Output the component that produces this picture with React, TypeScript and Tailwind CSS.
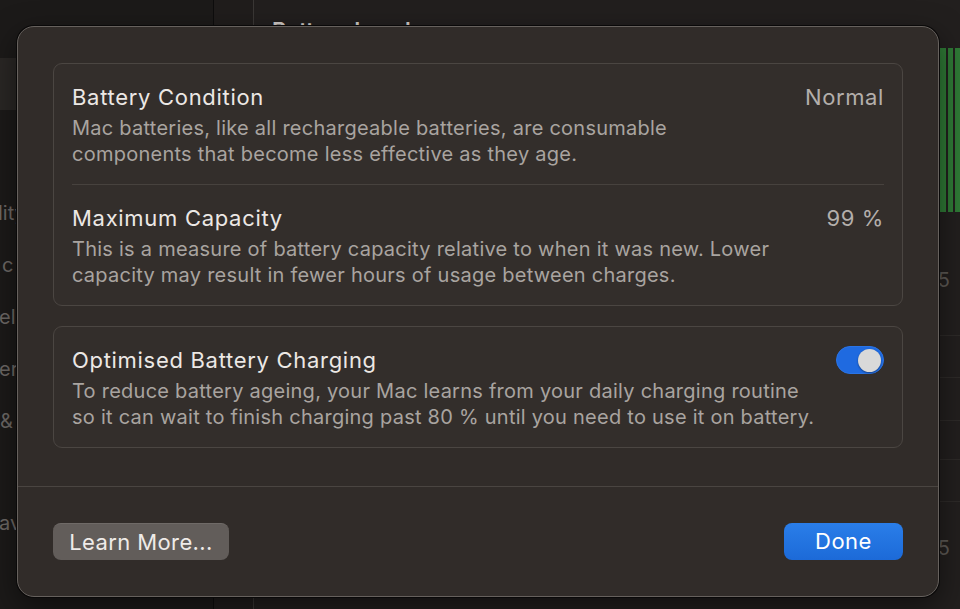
import React from "react";

const font = { fontFamily: "Inter, 'Noto Sans', 'Liberation Sans', sans-serif" };

function Section({ title, value, desc, toggle }: { title: string; value?: string; desc: string[]; toggle?: boolean }) {
  return (
    <div className="pl-[18px] pr-[18px] pt-[19px] pb-[17px]">
      <div className="flex items-center justify-between h-[28px]">
        <div className="text-[22px] leading-[28px] text-[#ece8e5] tracking-[0.7px]">{title}</div>
        {value && <div className="text-[22px] leading-[28px] text-[#b4afab] tracking-[0.6px]">{value}</div>}
        {toggle && (
          <div className="w-[48px] h-[28px] rounded-full bg-[#1f6ae0] flex items-center justify-end pr-[2px] border border-[#2a74e6]">
            <div className="w-[23px] h-[23px] rounded-full bg-[#d9d9d9] shadow-[0_1px_2px_rgba(0,0,0,0.4)]" />
          </div>
        )}
      </div>
      <div className="mt-[4px] text-[20px] leading-[26px] text-[#a9a4a0] tracking-[0.25px]">
        {desc.map((d, i) => (
          <div key={i}>{d}</div>
        ))}
      </div>
    </div>
  );
}

export default function App() {
  return (
    <div className="relative w-[960px] h-[609px] overflow-hidden bg-[#1e1b1a]" style={font}>
      {/* background app */}
      <div className="flex h-full">
        <div className="w-[214px] h-full bg-[#1c1a19] border-r border-[#0e0d0d] flex flex-col">
          <div className="h-[58px]" />
          <div className="h-[52px] bg-[#2a2725]" />
          <div className="flex flex-col text-[20px] text-[#6e6966] mt-[90px] gap-[26px] leading-[26px] pl-[0px]">
            <div className="ml-[-2px]">lity</div>
            <div className="ml-[2px]">c</div>
            <div className="ml-[-1px]">ells</div>
            <div className="ml-[-1px]">ers</div>
            <div className="ml-[0px]">&amp; S</div>
            <div className="mt-[50px] ml-[-1px]">avs</div>
          </div>
        </div>
        <div className="w-[40px] h-full bg-[#201d1c] border-r border-[#3a3735]" />
        <div className="flex-1 h-full bg-[#221f1e] flex flex-col">
          <div className="h-[48px] pl-[18px] pt-[14px] text-[22px] font-semibold text-[#cfcac6]">Battery Level</div>
          <div className="flex justify-end">
            <div className="flex gap-[2px] h-[164px] w-[20px]">
              <div className="w-[6px] bg-[#2f7a36]" />
              <div className="w-[5px] bg-[#2f7a36]" />
              <div className="w-[5px] bg-[#2f7a36]" />
            </div>
          </div>
          <div className="flex justify-end mt-[55px] text-[20px] leading-[26px] text-[#5d5955] mr-[10px]">5</div>
          <div className="mt-[42px] border-t border-[#2d2a28]" />
          <div className="mt-[41px] border-t border-[#2d2a28]" />
          <div className="mt-[42px] border-t border-[#2d2a28]" />
          <div className="mt-[38px] border-t border-[#2d2a28]" />
          <div className="mt-[41px] border-t border-[#2d2a28]" />
          <div className="flex justify-end mt-[33px] text-[20px] leading-[26px] text-[#5d5955] mr-[10px]">5</div>
        </div>
      </div>

      {/* dialog */}
      <div className="absolute left-[17px] top-[26px] w-[922px] h-[571px] rounded-[17px] bg-[#312c29] border border-[#66615d] shadow-[0_0_0_1px_#0a0909,0_10px_30px_rgba(0,0,0,0.5)] flex flex-col">
        <div className="px-[35px] pt-[36px] flex flex-col gap-[20px]">
          <div className="rounded-[9px] border border-[#4b4642] bg-[#332e2b]">
            <Section
              title="Battery Condition"
              value="Normal"
              desc={[
                "Mac batteries, like all rechargeable batteries, are consumable",
                "components that become less effective as they age.",
              ]}
            />
            <div className="mx-[18px] border-t border-[#47423e]" />
            <Section
              title="Maximum Capacity"
              value="99 %"
              desc={[
                "This is a measure of battery capacity relative to when it was new. Lower",
                "capacity may result in fewer hours of usage between charges.",
              ]}
            />
          </div>
          <div className="rounded-[9px] border border-[#4b4642] bg-[#332e2b]">
            <Section
              title="Optimised Battery Charging"
              toggle
              desc={[
                "To reduce battery ageing, your Mac learns from your daily charging routine",
                "so it can wait to finish charging past 80 % until you need to use it on battery.",
              ]}
            />
          </div>
        </div>
        <div className="mt-[38px] border-t border-[#4a4541]" />
        <div className="flex-1 flex items-center justify-between px-[35px]">
          <button className="h-[37px] w-[176px] rounded-[8px] bg-[#625d5a] text-[22px] tracking-[0.4px] text-[#efebe8] flex items-center justify-center border-t border-[#6f6a67]">
            Learn More...
          </button>
          <button className="h-[37px] w-[119px] rounded-[8px] bg-gradient-to-b from-[#2a7ee9] to-[#1c6ad8] text-[22px] tracking-[0.5px] text-white flex items-center justify-center">
            Done
          </button>
        </div>
      </div>
    </div>
  );
}
